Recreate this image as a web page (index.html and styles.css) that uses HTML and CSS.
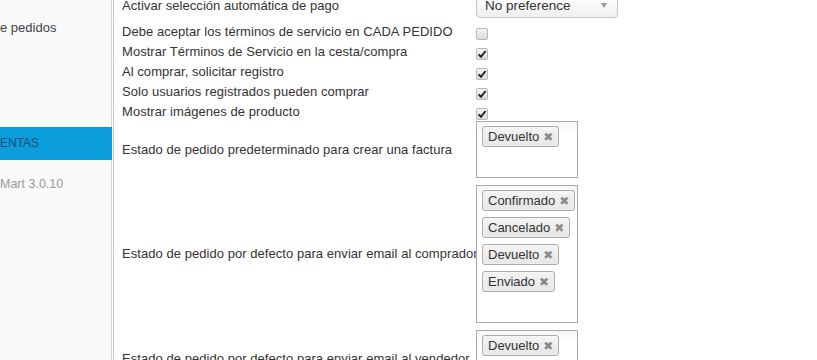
FILE: index.html
```html
<!DOCTYPE html>
<html lang="es">
<head>
<meta charset="utf-8">
<link rel="stylesheet" href="styles.css">
</head>
<body>
<div class="page">
  <aside class="sidebar">
    <div class="nav-item">e pedidos</div>
    <div class="nav-active">ENTAS</div>
    <div class="version">Mart 3.0.10</div>
  </aside>
  <main class="main">
    <div class="form">
      <div class="row row-select">
        <div class="label">Activar selección automática de pago</div>
        <div class="field"><div class="select"><span>No preference</span><span class="caret"></span></div></div>
      </div>
      <div class="row row-check">
        <div class="label">Debe aceptar los términos de servicio en CADA PEDIDO</div>
        <div class="field"><span class="cb"></span></div>
      </div>
      <div class="row row-check">
        <div class="label">Mostrar Términos de Servicio en la cesta/compra</div>
        <div class="field"><span class="cb checked"><svg viewBox="0 0 12 12" width="12" height="12"><path d="M2.6 6.4 L5 8.8 L9.6 3" fill="none" stroke="#222" stroke-width="2"/></svg></span></div>
      </div>
      <div class="row row-check">
        <div class="label">Al comprar, solicitar registro</div>
        <div class="field"><span class="cb checked"><svg viewBox="0 0 12 12" width="12" height="12"><path d="M2.6 6.4 L5 8.8 L9.6 3" fill="none" stroke="#222" stroke-width="2"/></svg></span></div>
      </div>
      <div class="row row-check">
        <div class="label">Solo usuarios registrados pueden comprar</div>
        <div class="field"><span class="cb checked"><svg viewBox="0 0 12 12" width="12" height="12"><path d="M2.6 6.4 L5 8.8 L9.6 3" fill="none" stroke="#222" stroke-width="2"/></svg></span></div>
      </div>
      <div class="row row-check">
        <div class="label">Mostrar imágenes de producto</div>
        <div class="field"><span class="cb checked"><svg viewBox="0 0 12 12" width="12" height="12"><path d="M2.6 6.4 L5 8.8 L9.6 3" fill="none" stroke="#222" stroke-width="2"/></svg></span></div>
      </div>
      <div class="row row-multi">
        <div class="label">Estado de pedido predeterminado para crear una factura</div>
        <div class="field"><div class="multi">
          <span class="chip">Devuelto <span class="x">✖</span></span>
          <span class="input-line"></span>
        </div></div>
      </div>
      <div class="row row-multi">
        <div class="label">Estado de pedido por defecto para enviar email al comprador</div>
        <div class="field"><div class="multi">
          <span class="chip">Confirmado <span class="x">✖</span></span>
          <span class="chip">Cancelado <span class="x">✖</span></span>
          <span class="chip">Devuelto <span class="x">✖</span></span>
          <span class="chip">Enviado <span class="x">✖</span></span>
          <span class="input-line"></span>
        </div></div>
      </div>
      <div class="row row-multi">
        <div class="label">Estado de pedido por defecto para enviar email al vendedor</div>
        <div class="field"><div class="multi">
          <span class="chip">Devuelto <span class="x">✖</span></span>
          <span class="input-line"></span>
        </div></div>
      </div>
    </div>
  </main>
</div>
</body>
</html>
```
FILE: styles.css
```css
html, body {
  margin: 0;
  padding: 0;
  background: #fff;
  overflow: hidden;
}
body {
  font-family: "Liberation Sans", Arial, sans-serif;
  color: #333;
  width: 817px;
  height: 360px;
}
.page {
  display: flex;
  height: 360px;
  overflow: hidden;
}
.sidebar {
  width: 111px;
  flex: none;
  background: #fafafa;
  border-right: 1px solid #d4d4d4;
  box-shadow: 1px 0 0 #fff, 2px 0 0 #c8c8c8;
  margin-right: 2px;
  display: flex;
  flex-direction: column;
}
.nav-item {
  font-size: 13px;
  color: #444;
  padding-top: 20px;
  height: 127px;
  box-sizing: border-box;
  line-height: 16px;
  white-space: nowrap;
}
.nav-active {
  background: #0b9cdc;
  color: #164e74;
  font-size: 12px;
  height: 33px;
  line-height: 33px;
  margin-right: -1px;
  white-space: nowrap;
}
.version {
  font-size: 12.5px;
  color: #999;
  padding-top: 16px;
  line-height: 16px;
  white-space: nowrap;
}
.main {
  flex: 1;
  padding-left: 8px;
}
.form {
  margin-top: -11px;
  display: flex;
  flex-direction: column;
}
.row {
  display: flex;
  align-items: center;
}
.label {
  width: 354px;
  flex: none;
  font-size: 13px;
  letter-spacing: 0.05px;
  line-height: 20px;
  white-space: nowrap;
}
.row-select {
  height: 33px;
}
.row-check {
  height: 20px;
}
.row-multi {
  padding-bottom: 7px;
}
.row-check + .row-multi {
  margin-top: -1px;
}
.select {
  display: flex;
  align-items: center;
  justify-content: space-between;
  padding: 0 10px 0 8px;
  box-sizing: border-box;
  width: 142px;
  height: 25px;
  border: 1px solid #c4c4c4;
  border-radius: 4px;
  background: linear-gradient(#ffffff, #f0f0f0);
  font-size: 13.5px;
  color: #333;
}
.caret {
  width: 0;
  height: 0;
  border-left: 3.5px solid transparent;
  border-right: 3.5px solid transparent;
  border-top: 5px solid #999;
}
.cb {
  display: block;
  width: 12px;
  height: 12px;
  box-sizing: border-box;
  border: 1px solid #b8b8b8;
  border-radius: 2px;
  background: linear-gradient(#f4f4f4, #dcdcdc);
  margin-top: 3px;
  position: relative;
}
.cb svg {
  position: absolute;
  left: -1px;
  top: -1px;
}
.multi {
  width: 102px;
  box-sizing: border-box;
  border: 1px solid #aaa;
  padding: 4px 0 0 5px;
  background: linear-gradient(#f6f6f6 0, #fff 12px);
  display: flex;
  flex-direction: column;
  align-items: flex-start;
  gap: 6px;
}
.chip {
  display: inline-flex;
  align-items: center;
  height: 21px;
  box-sizing: border-box;
  border: 1px solid #aaa;
  border-radius: 3px;
  background: linear-gradient(#f4f4f4, #e6e6e6);
  padding: 0 5px;
  font-size: 13px;
  color: #333;
  white-space: nowrap;
  box-shadow: 0 0 2px #fff inset;
}
.x {
  color: #8a8a8a;
  font-size: 12px;
  margin-left: 4px;
  font-family: "DejaVu Sans", sans-serif;
}
.input-line {
  display: block;
  height: 24px;
}
```
